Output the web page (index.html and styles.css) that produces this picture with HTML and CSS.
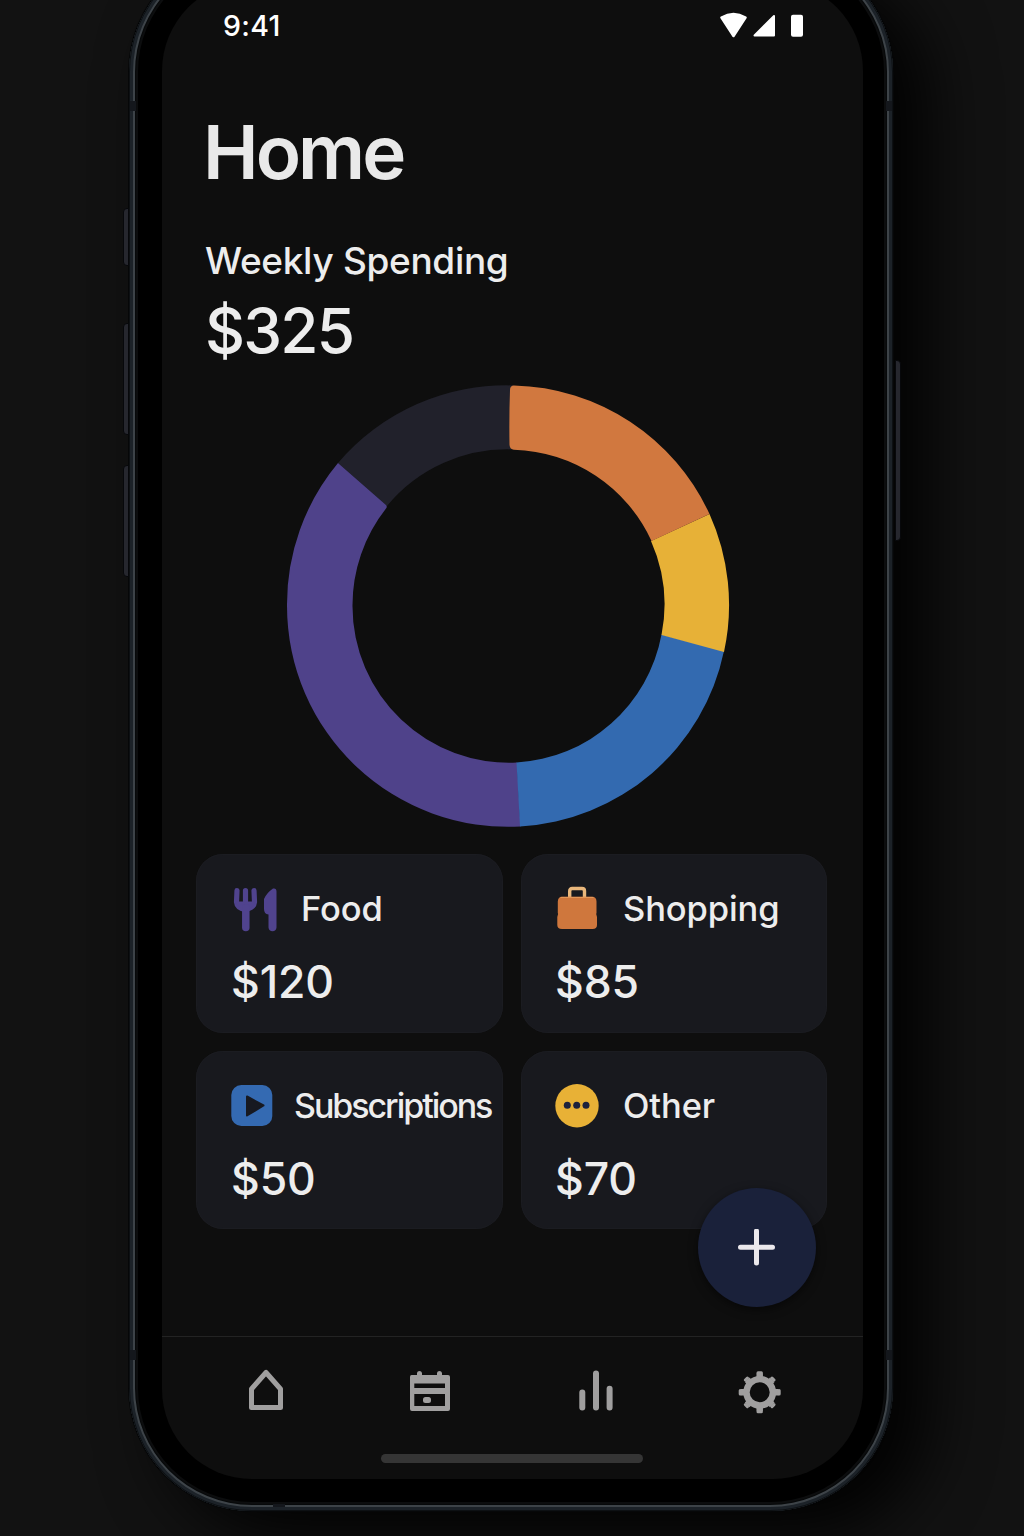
FILE: index.html
```
<!DOCTYPE html>
<html lang="en">
<head>
<meta charset="utf-8">
<title>Home</title>
<link rel="stylesheet" href="styles.css">
</head>
<body>
<div class="phone">
  <span class="key key-mute"></span>
  <span class="key key-up"></span>
  <span class="key key-down"></span>
  <span class="key key-power"></span>
  <span class="seam seam-lt"></span><span class="seam seam-rt"></span>
  <span class="seam seam-lb"></span><span class="seam seam-rb"></span>
  <span class="seam seam-foot"></span>
  <div class="screen">
    <header class="status">
      <span class="time">9:41</span>
      <svg class="signals" width="84" height="26" viewBox="0 0 84 26" fill="#fff" stroke="#fff" stroke-linejoin="round">
        <path d="M1.5 5.5Q13.5-1.500 25.500 5.500L13.500 24Z" stroke-width="2.500"/>
        <path d="M34.500 23.500L54 4V23.500Z" stroke-width="2"/>
        <rect x="71" y="2.700" width="12" height="22" rx="2" stroke="none"/>
      </svg>
    </header>
    <main class="content">
      <h1 class="title">Home</h1>
      <p class="subtitle">Weekly Spending</p>
      <p class="total">$325</p>
      <svg class="donut" width="444" height="444" viewBox="286 384 444 444">
        <path fill="#21212b" d="M338 463A221 221 0 0 1 514 385.500V449.500A156 156 0 0 0 387 506Z"/>
        <path fill="#4f428a" d="M338 463A221 221 0 0 0 287 606A221 221 0 0 0 520.500 826.500L517 762.500A156.500 156.500 0 0 1 352.500 606A156.500 156.500 0 0 1 386 508.500Q387.500 506.500 386 505Z"/>
        <path fill="#336ab0" d="M520 826.500A221 221 0 0 0 724 651L661.500 634.500A156.500 156.500 0 0 1 516.500 762.500Z"/>
        <path fill="#e7b137" d="M724 652A221 221 0 0 0 709.500 514L651 541A156.500 156.500 0 0 1 661.500 635Z"/>
        <path fill="#d1783f" d="M709.500 514A221 221 0 0 0 514 385.500Q510 385.500 510 390Q509 417 509.500 445Q510 449.500 514 449.700A156.500 156.500 0 0 1 651.500 541Z"/>
      </svg>
      <section class="cards">
        <article class="card">
          <div class="card-head">
            <svg class="icon" width="46" height="46" viewBox="0 0 46 46" fill="none" stroke="#50438e" stroke-linecap="round" stroke-linejoin="round">
              <path d="M6 4.500L5.500 16Q6 22 14.500 23.500Q23 22 23.500 16L23 4.500M14.500 4.500V22" stroke-width="5.200"/>
              <path d="M6.500 17H22.500L14.500 24Z" stroke-width="3" fill="#50438e"/>
              <path d="M14.800 22V41.500" stroke-width="7.500"/>
              <path d="M42 2.500Q45.500 1.800 45.500 5.500V41.500Q45 45.300 41.500 45.300Q38 45.300 37.500 41.500V28.500Q33 28 33 23V13Q35.500 7 42 2.500Z" fill="#50438e" stroke="none"/>
            </svg>
            <h2 class="name">Food</h2>
          </div>
          <p class="amount">$120</p>
        </article>
        <article class="card">
          <div class="card-head">
            <svg class="icon" width="46" height="46" viewBox="0 0 46 46">
              <path d="M14.700 13V5Q14.700 2.500 17.200 2.500H27Q29.500 2.500 29.500 5V13" fill="none" stroke="#e9b77c" stroke-width="3.400"/>
              <path d="M7 10.700H37Q41.500 10.700 41.500 15.500V27L41.200 28L42 31V39Q42 43 37.500 43H7Q2.300 43 2.300 39V31L3.100 28L2.800 27V15.500Q3 10.700 7 10.700Z" fill="#cf773d"/>
              <path d="M6 11.400H38" stroke="#e69b5c" stroke-linecap="round"/>
            </svg>
            <h2 class="name">Shopping</h2>
          </div>
          <p class="amount">$85</p>
        </article>
        <article class="card">
          <div class="card-head">
            <svg class="icon" width="46" height="46" viewBox="0 0 46 46">
              <rect x=".3" y="2" width="41" height="41" rx="10" fill="#346ab2"/>
              <path d="M16 13.500L32.500 22.500L16 32.500Z" fill="#171921" stroke="#171921" stroke-width="2" stroke-linejoin="round"/>
            </svg>
            <h2 class="name subs">Subscriptions</h2>
          </div>
          <p class="amount">$50</p>
        </article>
        <article class="card">
          <div class="card-head">
            <svg class="icon" width="46" height="46" viewBox="0 0 46 46">
              <circle cx="22" cy="22.700" r="21.700" fill="#e8b136"/>
              <g fill="#1d223c"><circle cx="12.300" cy="22.300" r="3.500"/><circle cx="21.700" cy="22.300" r="3.500"/><circle cx="31" cy="22.300" r="3.500"/></g>
            </svg>
            <h2 class="name">Other</h2>
          </div>
          <p class="amount">$70</p>
        </article>
      </section>
      <button class="fab" aria-label="Add">
        <svg width="38" height="38" viewBox="0 0 38 38" stroke="#ebe8ec" stroke-width="5" stroke-linecap="round"><path d="M18.500 2V34M2.500 18.300H34.500"/></svg>
      </button>
    </main>
    <nav class="tabs">
      <a class="tab"><svg width="48" height="48" viewBox="0 0 48 48" fill="none" stroke="#a09f9f" stroke-width="5" stroke-linejoin="round"><path d="M24 4.500L9.500 21V39.500H38.500V21Z"/></svg></a>
      <a class="tab"><svg width="48" height="48" viewBox="1 0 48 48" fill="#a09f9f"><path fill-rule="evenodd" d="M5.500 7H11V5Q11.300 3 13.500 3Q15.500 3 16 5V7H31V5Q31.300 3 33.500 3Q35.500 3 36 5V7H42Q44 7 44 9V41Q44 43 42 43H6Q4 43 4 41V9Q4 7 5.500 7ZM8.300 15.500V20H39V15.500ZM8.300 26V38H39V26Z"/><rect x="17" y="29" width="8" height="6" rx="2.500"/></svg></a>
      <a class="tab"><svg width="48" height="48" viewBox="-1 -.5 48 48" stroke="#a09f9f" stroke-width="6" stroke-linecap="round"><path d="M10.300 24V39M24 5V39M37.600 20.300V39"/></svg></a>
      <a class="tab"><svg width="48" height="48" viewBox="0 0 48 48" fill="none" stroke="#a09f9f"><circle cx="23.700" cy="24.300" r="13.200" stroke-width="6.400"/><path d="M23.700 5.300V10M23.700 38.600V43.300M4.700 24.300H9.400M38 24.300H42.700M11.100 11.700L13.600 14.200M33.800 34.400L36.300 36.900M36.300 11.700L33.800 14.200M13.600 34.400L11.100 36.900" stroke-width="6.500"/><path d="M22 4.800H25.400M22 43.800H25.400M4.200 22.600V26M43.200 22.600V26M9.400 12L11.400 10M36 10L38 12M9.400 36.600L11.400 38.600M36 38.600L38 36.600" stroke-width="3" stroke-linecap="round"/></svg></a>
    </nav>
    <div class="handle"></div>
  </div>
</div>
</body>
</html>
```
FILE: styles.css
```
* { box-sizing: border-box; margin: 0; padding: 0; }
html, body { height: 1536px; overflow: hidden; }
body {
  background: #121212;
  font-family: Inter, "Liberation Sans", sans-serif;
  color: #ededed;
}
.phone {
  position: relative;
  display: flex;
  width: 764px;
  height: 1562px;
  margin: -51px 0 0 129px;
  padding: 32px 30px 32px 33px;
  border-radius: 123px;
  background: #000;
  box-shadow:
    inset 0 0 0 1px #0d1013,
    inset 0 0 0 4px #1c2228,
    inset 0 0 0 6px #3d4348,
    inset 0 0 0 7px #07090a,
    inset 0 0 0 9px #0c0d0e,
    0 0 0 1px #060708,
    35px 25px 65px rgba(0, 0, 0, .9);
}
.screen {
  display: flex;
  flex-direction: column;
  width: 701px;
  height: 1498px;
  border-radius: 90px;
  background: #0e0e0e;
  overflow: hidden;
}
.key {
  position: absolute;
  left: -6px;
  width: 6px;
  border: 1px solid #07080b;
  border-radius: 4px 0 0 4px;
  background: #26272e;
}
.key-mute { top: 259px; height: 58px; }
.key-up { top: 374px; height: 112px; }
.key-down { top: 516px; height: 112px; }
.key-power { left: auto; right: -8px; top: 411px; height: 181px; border-radius: 0 4px 4px 0; }
.seam { position: absolute; width: 6px; height: 10px; background: #14171c; }
.seam-lt { left: 1px; top: 152px; }
.seam-rt { right: 1px; top: 152px; }
.seam-lb { left: 1px; top: 1401px; }
.seam-rb { right: 1px; top: 1401px; }
.seam-foot { left: 144px; bottom: 4px; width: 12px; height: 3px; }

.status {
  display: flex;
  flex: none;
  justify-content: space-between;
  height: 92px;
  padding: 30px 59px 0 61px;
}
.time { margin-top: -2px; font-size: 28.5px; line-height: 34px; font-weight: 500; color: #fff; letter-spacing: .3px; }
.signals { margin-top: 1px; }

.content { display: flex; flex: none; flex-direction: column; position: relative; height: 1263px; padding: 0 34px; }
.title, .subtitle, .total { margin-left: 9px; white-space: nowrap; }
.title { margin: 34px 0 0 7px; font-size: 74.5px; line-height: 90px; font-weight: 600; letter-spacing: -2.9px; color: #e9e9e9; }
.subtitle { margin-top: 41px; font-size: 37px; line-height: 46px; font-weight: 450; letter-spacing: -.32px; }
.total { margin-top: 9px; font-size: 62px; line-height: 76px; font-weight: 500; letter-spacing: -1.8px; }
.donut { flex: none; margin: 15px 0 0 90px; }
.cards {
  display: grid;
  grid-template-columns: 307px 306px;
  grid-template-rows: 179px 178px;
  gap: 18px;
  margin-top: 26px;
}
.card { padding: 31px 0 0 35px; border-radius: 27px; background: #18191e; box-shadow: inset 0 0 0 1px #1b1c21; }
.card:nth-child(even) { padding-left: 34px; }
.card-head { display: flex; align-items: center; height: 48px; }
.icon { flex: none; }
.name { margin-left: 24px; font-size: 34.5px; line-height: 44px; font-weight: 500; letter-spacing: -.1px; white-space: nowrap; }
.card:nth-child(even) .name { margin-left: 22px; }
.name.subs { margin-left: 17px; font-size: 34px; letter-spacing: -2.05px; }
.amount { margin-top: 21px; font-size: 44.5px; line-height: 56px; font-weight: 500; letter-spacing: -.1px; }
.fab {
  position: absolute;
  right: 47px;
  bottom: 29px;
  display: flex;
  align-items: center;
  justify-content: center;
  width: 118px;
  height: 119px;
  border: 0;
  border-radius: 50%;
  background: #1a213a;
  box-shadow: 0 3px 10px rgba(0, 0, 0, .5);
}
.tabs {
  display: flex;
  flex: none;
  justify-content: space-between;
  height: 118px;
  padding: 31px 79px 0 80px;
  border-top: 1px solid #232323;
}
.tab { height: 48px; }
.handle { flex: none; width: 262px; height: 9px; margin-left: 219px; border-radius: 5px; background: #353535; }
```
